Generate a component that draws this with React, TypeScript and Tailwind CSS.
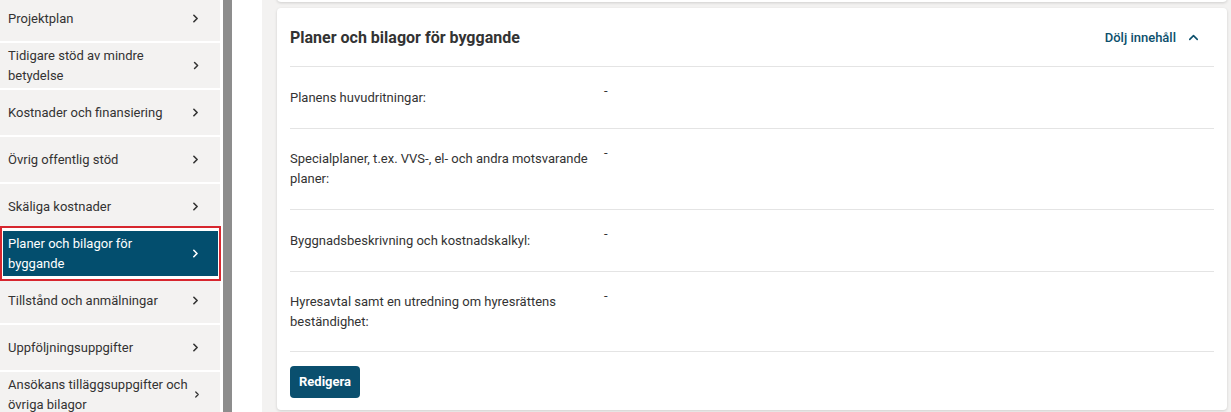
import { ChevronRight, ChevronUp } from "lucide-react";

const navItems = [
  "Projektplan",
  "Tidigare stöd av mindre betydelse",
  "Kostnader och finansiering",
  "Övrig offentlig stöd",
  "Skäliga kostnader",
  "Planer och bilagor för byggande",
  "Tillstånd och anmälningar",
  "Uppföljningsuppgifter",
  "Ansökans tilläggsuppgifter och övriga bilagor",
];
const ACTIVE = "Planer och bilagor för byggande";

const rows = [
  { label: "Planens huvudritningar:", h: "h-[62px]" },
  { label: "Specialplaner, t.ex. VVS-, el- och andra motsvarande planer:", h: "h-[81px]" },
  { label: "Byggnadsbeskrivning och kostnadskalkyl:", h: "h-[62px]" },
  { label: "Hyresavtal samt en utredning om hyresrättens beständighet:", h: "h-[80px]" },
];

function SideNav() {
  return (
    <div className="flex w-[220px] shrink-0 flex-col gap-[2px] -mt-[4px]">
      {navItems.map((item) => {
        const active = item === ACTIVE;
        return (
          <div
            key={item}
            className={
              active
                ? "relative z-10 flex h-[45px] shrink-0 items-center justify-between bg-[#034e6e] pl-2 pr-[18px] text-white"
                : "flex h-[45px] shrink-0 items-center justify-between bg-[#f3f2f1] pl-2 pr-[18px] text-[#333]"
            }
          >
            <span className="max-w-[184px] text-[13px] leading-[20px]">{item}</span>
            <ChevronRight size={13} strokeWidth={3} />
            {active && (
              <div className="pointer-events-none absolute -top-[5px] -bottom-[5px] left-0 -right-[1px] border-2 border-[#d7262e] shadow-[inset_0_0_0_1px_#fff]" />
            )}
          </div>
        );
      })}
    </div>
  );
}

export default function App() {
  return (
    <div className="flex h-[412px] w-[1231px] overflow-hidden bg-white font-['Roboto',sans-serif]">
      <SideNav />
      <div className="ml-[3px] w-[9px] shrink-0 bg-[#8d8d8d]" />
      <div className="w-[30px] shrink-0 bg-white" />
      <div className="relative flex-1 bg-[#f3f2f1] pl-[15px] pr-[4px] pt-[8px]">
        <div className="absolute left-[15px] right-[4px] -top-[6px] h-[8px] rounded-b bg-white shadow-[0_1px_3px_rgba(0,0,0,0.15)]" />
        <div className="rounded bg-white px-[13px] shadow-[0_1px_3px_rgba(0,0,0,0.15)]">
          <div className="flex h-[59px] items-center justify-between border-b border-[#e4e4e4] pt-[1px]">
            <h2 className="text-[16px] font-bold text-[#333]">Planer och bilagor för byggande</h2>
            <div className="flex items-center gap-[10px] pr-[13px] text-[13px] font-medium text-[#0b4f6c]">
              <span>Dölj innehåll</span>
              <ChevronUp size={15} strokeWidth={2.5} />
            </div>
          </div>
          {rows.map((r) => (
            <div key={r.label} className={`flex border-b border-[#e4e4e4] ${r.h}`}>
              <div className="flex w-[314px] shrink-0 items-center pr-[14px] text-[13px] leading-[20px] text-[#333]">
                {r.label}
              </div>
              <div className="pt-[14px] text-[13px] leading-[20px] text-[#333]">-</div>
            </div>
          ))}
          <div className="pt-[14px] pb-[12px]">
            <button
              type="button"
              className="h-[32px] w-[70px] rounded bg-[#0a4f6e] text-[13px] font-bold text-white"
            >
              Redigera
            </button>
          </div>
        </div>
      </div>
    </div>
  );
}
